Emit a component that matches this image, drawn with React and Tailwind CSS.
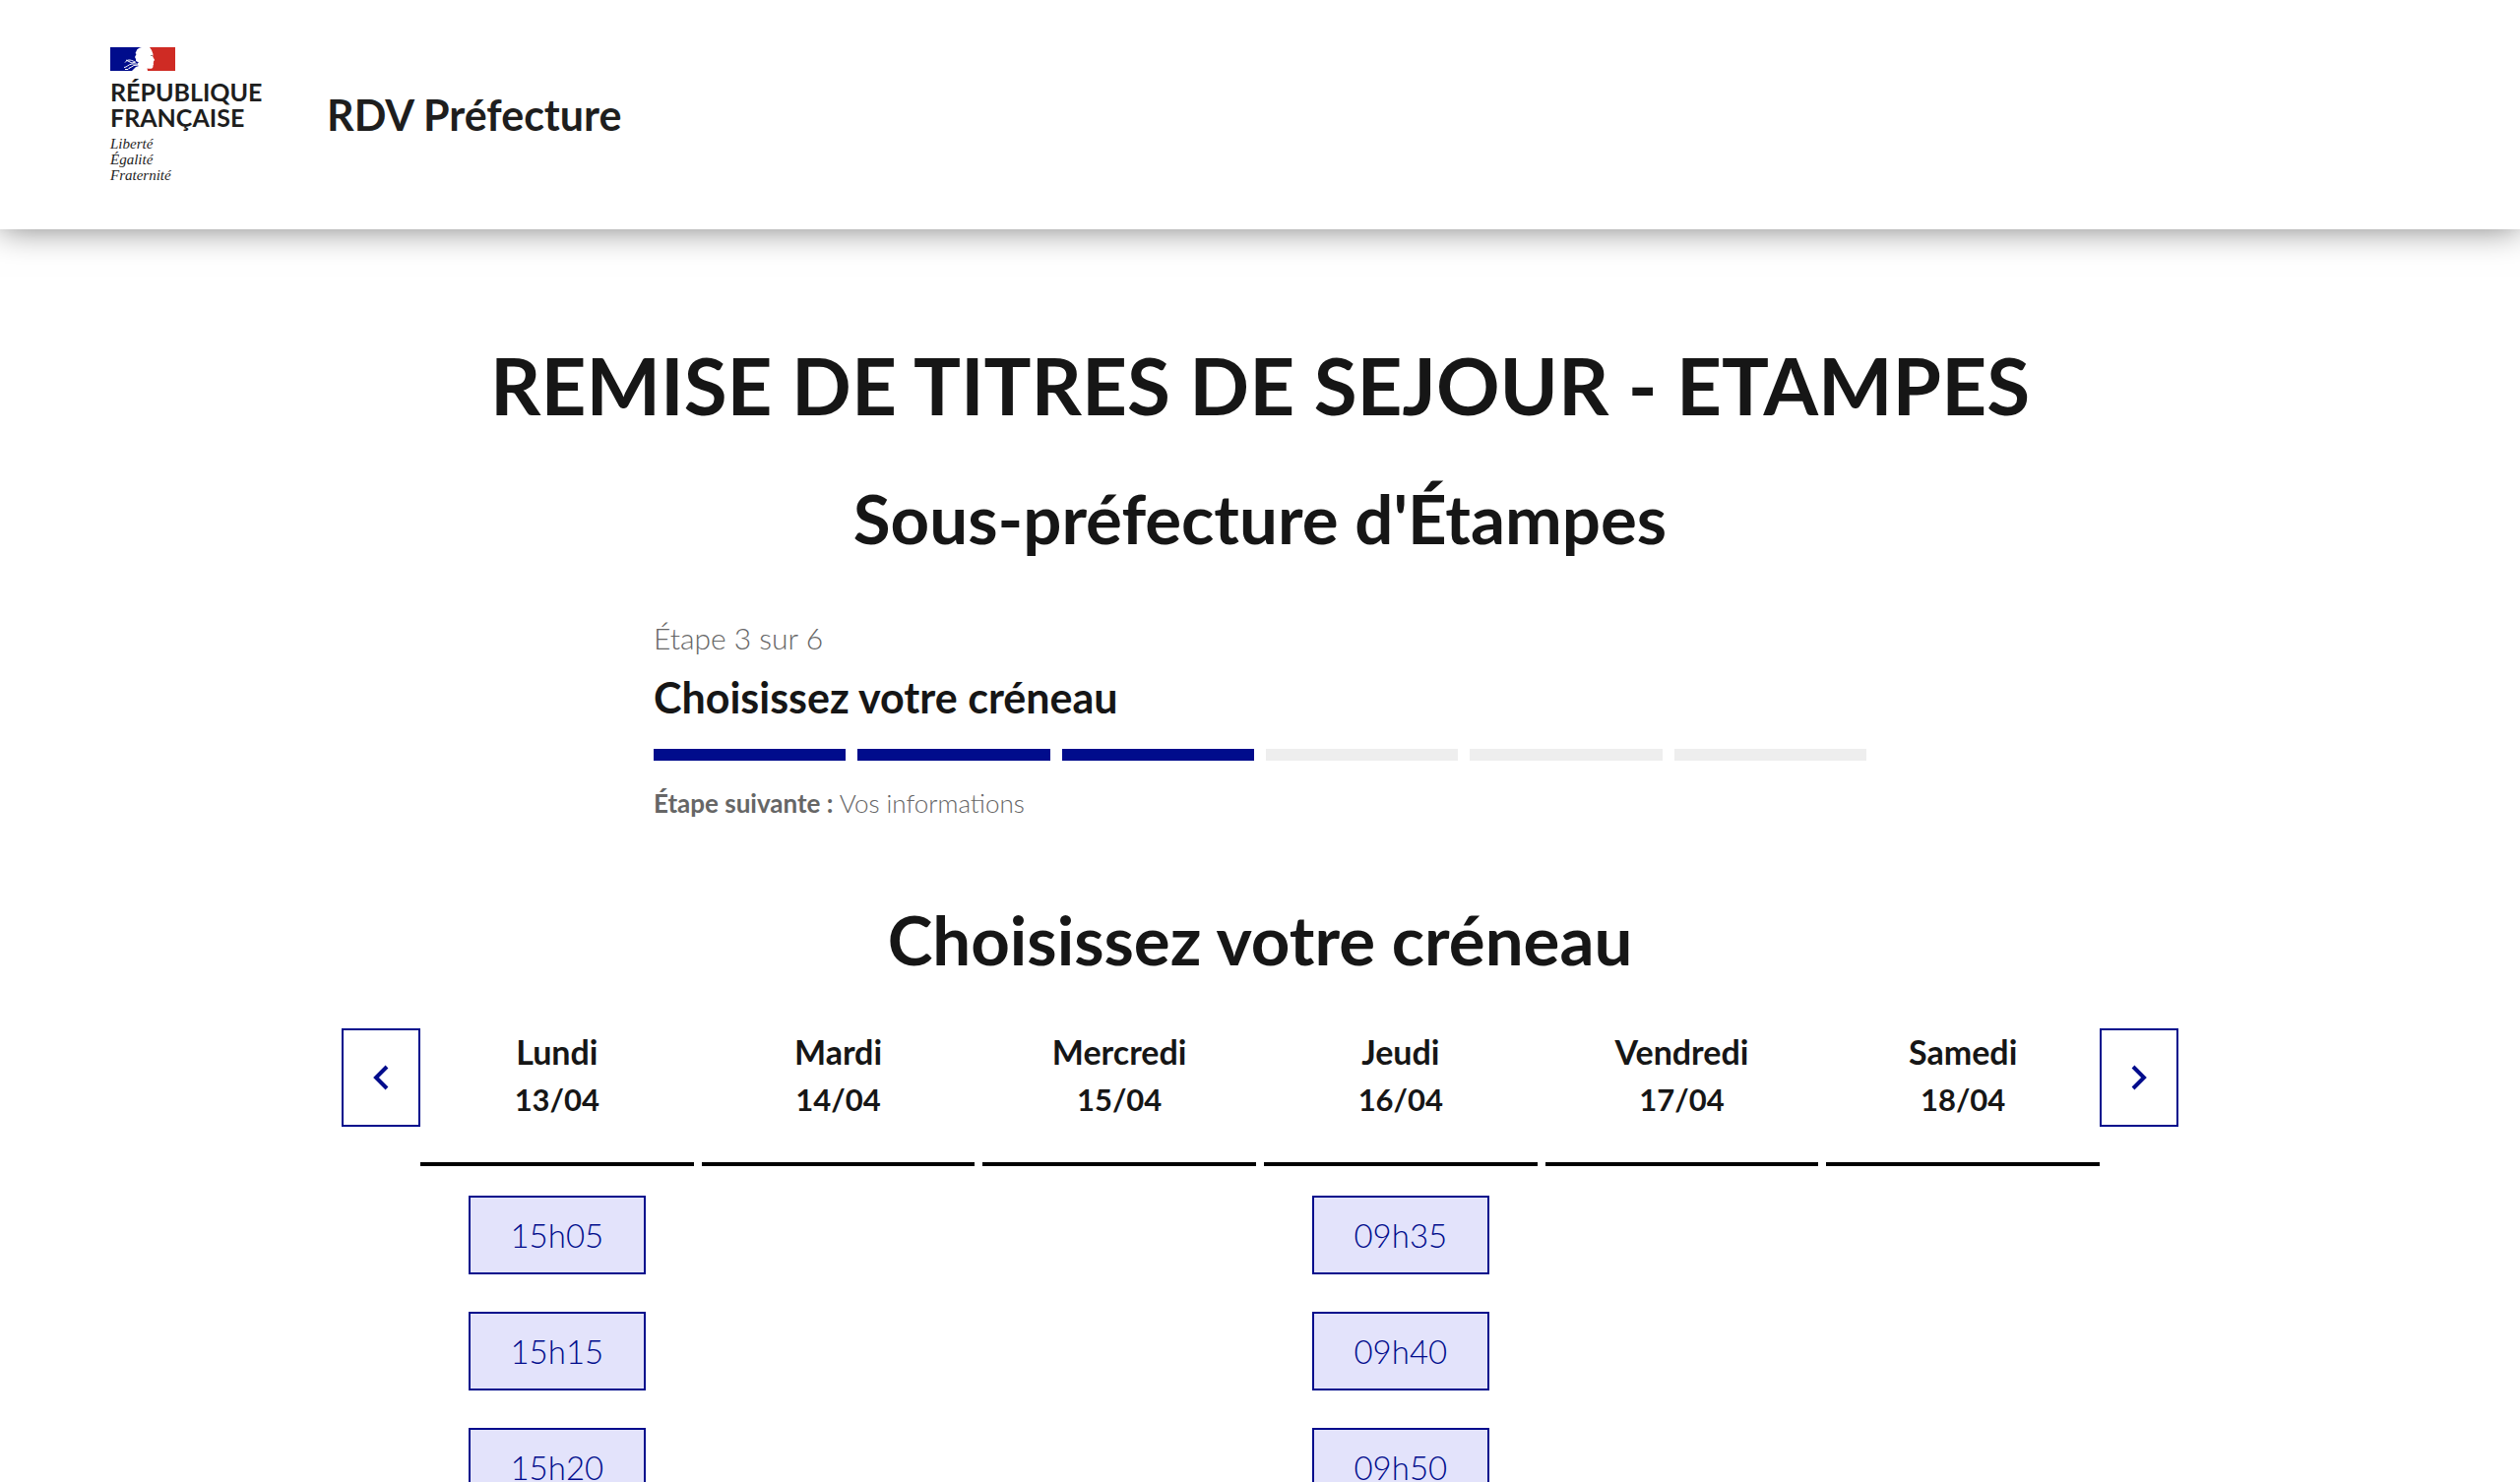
const STEPS = [1, 2, 3, 4, 5, 6]
const CURRENT_STEP = 3

const DAYS = [
    { name: "Lundi", date: "13/04", slots: ["15h05", "15h15", "15h20"] },
    { name: "Mardi", date: "14/04", slots: [] },
    { name: "Mercredi", date: "15/04", slots: [] },
    { name: "Jeudi", date: "16/04", slots: ["09h35", "09h40", "09h50"] },
    { name: "Vendredi", date: "17/04", slots: [] },
    { name: "Samedi", date: "18/04", slots: [] },
]

// Tricolour flag with Marianne's profile cut out of the middle.
function Flag() {
    return (
        <svg viewBox="0 0 66 24" className="h-6 w-[66px]" aria-hidden="true">
            <path
                fill="#000c8c"
                d="M0 0h32c-3 .5-5 2-5.5 4l-1 2 1 1-1.500 3 1 2v2l3 1.500-2 1.500 2 2-3 1-4 4H0z"
            />
            <path
                fill="#cf2b24"
                d="M40 0h26v24H38l-.5-2.500c2.500.5 4.500.5 5.500-.5.8-1 .2-2 .7-3l.5-1-.7-1 .7-.8-.2-1.200 1.200-.8-2-3.700.3-2.500L42 3z"
            />
            <path
                d="M15 15.500c2-3 5-3.500 10-.5M16 13l6 3 4-1M14 20.500c3 0 4-3 8-3.500h5M19 21.500l5-3 5-.5M15 22.500h3l2-2"
                stroke="#fff"
                fill="none"
            />
            <path stroke="#888" d="M41 8.500h2" />
        </svg>
    )
}

function Logo() {
    return (
        <div className="flex w-[160px] flex-col">
            <Flag />
            <p className="mt-2 text-[25px] leading-[26px] font-bold text-[#1e1e1e]">
                RÉPUBLIQUE
                <br />
                FRANÇAISE
            </p>
            <p className="mt-1.5 font-['Liberation_Serif',serif] text-[15px] leading-4 text-[#1e1e1e] italic">
                Liberté
                <br />
                Égalité
                <br />
                Fraternité
            </p>
        </div>
    )
}

function Stepper() {
    return (
        <section className="mx-auto mt-[62px] w-full max-w-[1232px]">
            <p className="text-[30px] leading-[38px] font-light text-[#666666]">
                Étape {CURRENT_STEP} sur {STEPS.length}
            </p>
            <h2 className="mt-3.5 text-[43px] leading-[56px] font-bold">Choisissez votre créneau</h2>
            <div className="mt-6 grid grid-cols-6 gap-3">
                {STEPS.map((step) => (
                    <span
                        key={step}
                        className={"h-3 " + (step <= CURRENT_STEP ? "bg-[#000c8c]" : "bg-[#eeeeee]")}
                    />
                ))}
            </div>
            <p className="mt-6 text-[26px] leading-[38px] font-light text-[#666666]">
                <span className="font-bold">Étape suivante :</span> Vos informations
            </p>
        </section>
    )
}

function WeekButton({ label, path }) {
    return (
        <button
            type="button"
            aria-label={label}
            className="flex h-[100px] w-20 flex-none cursor-pointer items-center justify-center border-2 border-[#000c8c] text-[#000c8c]"
        >
            <svg viewBox="0 0 32 32" className="size-8" fill="none" stroke="currentColor" strokeWidth="4">
                <path d={path} />
            </svg>
        </button>
    )
}

function Day({ name, date, slots }) {
    return (
        <div className="flex flex-col items-center">
            <h4 className="w-full border-b-4 border-black pb-10 text-center text-[34px] leading-[48px] font-bold">
                {name}
                <span className="block text-[31px]">{date}</span>
            </h4>
            <ul className="mt-[30px] flex flex-col gap-[38px]">
                {slots.map((slot) => (
                    <li key={slot}>
                        <button
                            type="button"
                            className="h-20 w-[180px] cursor-pointer border-2 border-[#000c8c] bg-[#e3e3fb] pt-0.5 text-[33px] font-light text-[#000c8c]"
                        >
                            {slot}
                        </button>
                    </li>
                ))}
            </ul>
        </div>
    )
}

export default function App() {
    return (
        <div className="min-h-screen bg-white font-[Lato,sans-serif] text-[#161616]">
            <header className="relative flex items-center gap-[60px] px-28 pt-12 pb-[47px] shadow-[0_0_32px_rgba(0,0,0,0.5)]">
                <Logo />
                <p className="text-[43px] leading-[56px] font-bold text-[#1e1e1e]">RDV Préfecture</p>
            </header>
            <main className="px-12 pt-[110px]">
                <h1 className="text-center text-[80px] leading-[96px] font-bold">
                    REMISE DE TITRES DE SEJOUR - ETAMPES
                </h1>
                <h2 className="mt-12 text-center text-[69px] leading-[80px] font-bold">
                    Sous-préfecture d'Étampes
                </h2>
                <Stepper />
                <h3 className="mt-20 text-center text-[69px] leading-[80px] font-bold">
                    Choisissez votre créneau
                </h3>
                <div className="mx-auto mt-[50px] flex max-w-[1866px] items-start">
                    <WeekButton label="Semaine précédente" path="M22 5 11 16l11 11" />
                    <div className="grid flex-1 grid-cols-6 gap-2">
                        {DAYS.map((day) => (
                            <Day key={day.name} {...day} />
                        ))}
                    </div>
                    <WeekButton label="Semaine suivante" path="M10 5l11 11-11 11" />
                </div>
            </main>
        </div>
    )
}
